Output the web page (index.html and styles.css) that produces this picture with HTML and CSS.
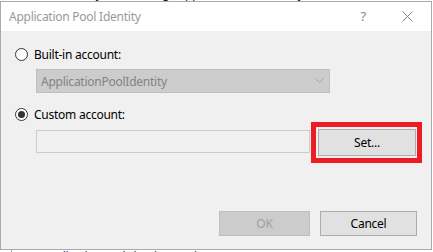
FILE: index.html
```html
<!DOCTYPE html>
<html lang="en">
<head>
    <meta charset="UTF-8">
    <title>Application Pool Identity</title>
    <link rel="stylesheet" href="styles.css">
</head>
<body>
    <div class="page">
        <div class="bg-strip bg-top"><span>Identity Pool Settings  ApplicationPoolIdentity</span></div>

        <div class="dialog">
            <div class="titlebar">
                <span class="title">Application Pool Identity</span>
                <span class="help">?</span>
                <svg class="close" width="11" height="11" viewBox="0 0 11 11">
                    <path d="M0.5 0.5 L10.5 10.5 M10.5 0.5 L0.5 10.5" stroke="#808080" stroke-width="1" fill="none"/>
                </svg>
            </div>

            <div class="content">
                <div class="radio-row">
                    <span class="radio"></span>
                    <span class="label">Built-in account:</span>
                </div>
                <div class="combo">
                    <span>ApplicationPoolIdentity</span>
                    <svg width="9" height="6" viewBox="0 0 9 6">
                        <path d="M0.5 0.5 L4.5 4.5 L8.5 0.5" stroke="#a6a6a6" stroke-width="1" fill="none"/>
                    </svg>
                </div>

                <div class="radio-row second">
                    <span class="radio checked"></span>
                    <span class="label">Custom account:</span>
                </div>
                <div class="field-row">
                    <div class="field"></div>
                    <div class="set-wrap">
                        <button class="btn btn-set">Set...</button>
                        <div class="highlight"></div>
                    </div>
                </div>

                <div class="footer">
                    <button class="btn btn-ok" disabled>OK</button>
                    <button class="btn btn-cancel">Cancel</button>
                </div>
            </div>
        </div>

        <div class="bg-strip bg-bottom">
            <span class="rule"></span>
            <span class="bg-text">ApplicationPoolIdentity (Settings) 30</span>
        </div>
    </div>
</body>
</html>
```

FILE: styles.css
```css
body {
    margin: 0;
    background-color: #ffffff;
    font-family: "Noto Sans", "Open Sans", sans-serif;
    font-size: 12px;
    letter-spacing: -0.25px;
    color: #000;
}

.page {
    width: 433px;
    height: 252px;
    overflow: hidden;
}

/* bits of the window behind the dialog */
.bg-strip {
    overflow: hidden;
    position: relative;
}

.bg-top {
    height: 1px;
}

.bg-top span {
    display: block;
    margin: -13px 0 0 60px;
    color: #1a1a40;
    line-height: 14px;
}

.bg-bottom {
    height: 3px;
    display: flex;
}

.rule {
    width: 1px;
    height: 3px;
    background-color: #a0a0a0;
    margin-left: 11px;
}

.bg-text {
    margin-left: 29px;
    line-height: 14px;
    color: #202060;
    white-space: nowrap;
}

/* dialog */
.dialog {
    width: 430px;
    height: 247px;
    border: 1px solid #aaaaaa;
    display: flex;
    flex-direction: column;
}

.titlebar {
    height: 29px;
    background-color: #ffffff;
    display: flex;
    align-items: center;
}

.title {
    margin-left: 8px;
    color: #999999;
    flex: 1;
}

.help {
    color: #8a8a8a;
    font-size: 13px;
    margin-right: 36px;
    margin-top: -1px;
}

.close {
    margin-right: 18px;
}

.content {
    flex: 1;
    background-color: #f0f0f0;
    padding: 17px 14px 0 14px;
}

.radio-row {
    display: flex;
    align-items: center;
    height: 13px;
}

.radio-row.second {
    margin-top: 15px;
}

.radio {
    width: 11px;
    height: 11px;
    border: 1px solid #333333;
    border-radius: 50%;
    background-color: #ffffff;
    position: relative;
}

.radio.checked::after {
    content: "";
    position: absolute;
    left: 2px;
    top: 2px;
    width: 7px;
    height: 7px;
    border-radius: 50%;
    background-color: #333333;
}

.label {
    margin-left: 6px;
}

.combo {
    margin: 8px 0 0 21px;
    width: 283px;
    height: 22px;
    border: 1px solid #bfbfbf;
    background-color: #cccccc;
    color: #838383;
    display: flex;
    align-items: center;
    justify-content: space-between;
    padding: 0 5px 0 4px;
}

.field-row {
    display: flex;
    align-items: flex-start;
    margin: 8px 0 0 21px;
}

.field {
    width: 272px;
    height: 21px;
    margin-top: 1px;
    border: 1px solid #cccccc;
    background-color: #f0f0f0;
}

.set-wrap {
    position: relative;
    margin-left: 8px;
}

.btn {
    font-family: inherit;
    font-size: 12px;
    letter-spacing: inherit;
    border: 1px solid #adadad;
    background-color: #e1e1e1;
    color: #000;
    padding: 0;
}

.btn-set {
    width: 98px;
    height: 27px;
    display: block;
}

/* red annotation frame round the Set button */
.highlight {
    position: absolute;
    inset: -7px -6px -7px -7px;
    border: 5px solid #ed1c24;
}

.footer {
    display: flex;
    justify-content: flex-end;
    gap: 10px;
    margin-top: 55px;
}

.btn-ok {
    width: 91px;
    height: 25px;
    background-color: #cccccc;
    border-color: #bfbfbf;
    color: #a0a0a0;
}

.btn-cancel {
    width: 97px;
    height: 25px;
}
```
